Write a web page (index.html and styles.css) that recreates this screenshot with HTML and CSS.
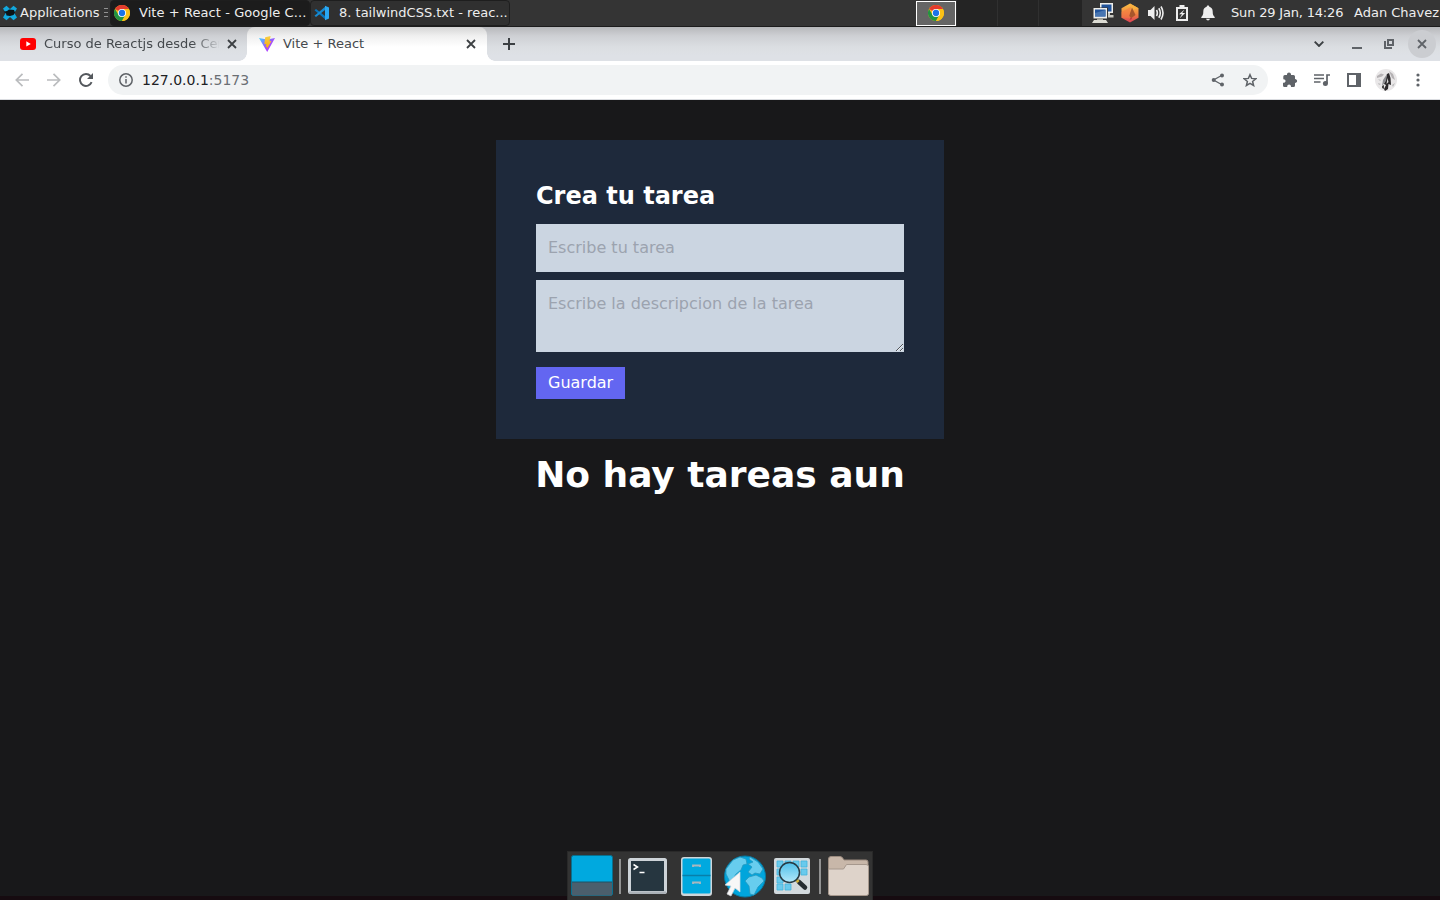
FILE: index.html
```html
<!DOCTYPE html>
<html lang="es">
<head>
<meta charset="utf-8">
<title>Vite + React</title>
<link rel="stylesheet" href="styles.css">
</head>
<body>
<svg class="defs" width="0" height="0">
  <defs>
    <linearGradient id="vite-a" x1="0" y1="0" x2="1" y2="1"><stop offset="0" stop-color="#41d1ff"/><stop offset=".55" stop-color="#a24dfe"/><stop offset="1" stop-color="#bd34fe"/></linearGradient>
    <linearGradient id="vite-b" x1="0" y1="0" x2="0" y2="1"><stop offset="0" stop-color="#f8d045"/><stop offset="1" stop-color="#f5a80c"/></linearGradient>
    <linearGradient id="gem" x1="0" y1="0" x2="0" y2="1"><stop offset="0" stop-color="#fbc045"/><stop offset=".5" stop-color="#f28a40"/><stop offset="1" stop-color="#dc3f55"/></linearGradient>
    <linearGradient id="lens" x1="0" y1="0" x2="0" y2="1"><stop offset="0" stop-color="#4dbfe9"/><stop offset="1" stop-color="#b4e8fa"/></linearGradient>
    <symbol id="chrome" viewBox="0 0 48 48">
      <circle cx="24" cy="24" r="24" fill="#fbc116"/>
      <path d="M24 24 3.2 12A24 24 0 0 1 44.8 12H24z" fill="#e33b2e"/>
      <path d="M3.2 12A24 24 0 0 0 24 48L34.4 30 24 24 13.6 30z" fill="#229342"/>
      <path d="M24 48A24 24 0 0 0 44.8 12H24L34.4 30z" fill="#fbc116"/>
      <circle cx="24" cy="24" r="12" fill="#fff"/><circle cx="24" cy="24" r="9.5" fill="#1a73e8"/>
    </symbol>
    <symbol id="cross" viewBox="0 0 10 10"><path d="m1 1 8 8M9 1 1 9" fill="none" stroke="currentColor" stroke-width="1.8"/></symbol>
  </defs>
</svg>
<div class="desktop">
  <header class="panel">
    <div class="apps">
      <svg width="16" height="16" viewBox="0 0 16 16"><path d="M1 3.500 4.500.8 8 4l3.500-3.200L15 3.500 12.300 8l2.700 4.500-3.500 2.700L8 12l-3.500 3.200L1 12.500 3.700 8z" fill="#12a8de"/><path d="M1.500 6.800 5 6l2-1.500 5 .5 1 2.500-1.500 2.500L8 11l-3.500-.5-.5-2.200z" fill="#0b1317"/></svg>
      <span>Applications</span>
      <svg class="grip" width="4" height="11" viewBox="0 0 4 11"><path d="M0 1.500h4M0 5.500h4M0 9.500h4" stroke="#929292"/></svg>
    </div>
    <div class="task task-active"><svg width="16" height="16"><use href="#chrome"/></svg><span>Vite + React - Google C...</span></div>
    <div class="task"><svg width="16" height="16" viewBox="0 0 16 16"><path d="M.5 5.200 2 4l10 7.800V15z" fill="#0875bd"/><path d="M.5 10.800 2 12l10-7.800V1z" fill="#168bd2"/><path d="m11 .8 4 1.700v11l-4 1.700z" fill="#2aa7f2"/></svg><span>8. tailwindCSS.txt - reac...</span></div>
    <div class="pager">
      <div class="space space-on"><svg width="16" height="16"><use href="#chrome"/></svg></div>
      <div class="space"></div><div class="space"></div><div class="space space-last"></div>
    </div>
    <div class="tray">
      <svg width="22" height="22" viewBox="0 0 22 22"><path d="M8 1h13v10H8z" fill="#eeeeea"/><path d="M9.500 2.500h10v7h-10z" fill="#20539b"/><path d="M13 11h5v2h3.500v2.500H13z" fill="#c9c9c2"/><path d="M1 5.500h15v11.500H1z" fill="#343434"/><path d="M1.500 6h13.500v10.500H1.500z" fill="#eeeeea"/><path d="M3 7.500h10.500v7H3z" fill="#20539b"/><path d="M3 11 13.500 8v6.500H3z" fill="#4775b1"/><path d="M5 16.500h6V18H5z" fill="#aaa99f"/><path d="M2 18h12l2 3H0z" fill="#dcdcd4"/></svg>
      <svg width="18" height="20" viewBox="0 0 18 20"><path d="m9 .5 8.500 4.700v9.600L9 19.500.5 14.800V5.200z" fill="url(#gem)"/><path d="m9 .5 8.500 4.700L11 7z" fill="#f7b03f"/><path d="m11 4.500 3.500 7.500-4 3L8 13z" fill="#a8562b"/><path d="m10 4-1.500 8.500L9 15 .5 14.800V9z" fill="#f27843" opacity=".55"/><path d="m8.500 17 1.500-3 1 2z" fill="#b2343f"/></svg>
      <svg width="16" height="16" viewBox="0 0 16 16"><path d="M0 5h2.500l4-4v14l-4-4H0z" fill="#eee"/><path d="M8.500 5q1.700 3 0 6M10.800 3.300q3 4.700 0 9.400M13 1.500q4 6.500 0 13" fill="none" stroke="#eee" stroke-width="1.600"/></svg>
      <svg width="12" height="16" viewBox="0 0 12 16"><path d="M3.500 0h5v2H12v14H0V2h3.500z" fill="#eee"/><path d="M2 4h8v10H2z" fill="#343434"/><path d="M8.500 4.500 3 9.200h3l-2.500 4.300L9.200 8H6.300z" fill="#eee"/></svg>
      <svg width="14" height="16" viewBox="0 0 14 16"><path d="M7 .5c.8 0 1.300.5 1.300 1.200C10.700 2.300 11.700 4 11.700 6.500c0 3 .5 4 2 5.500v1H.3v-1c1.500-1.500 2-2.500 2-5.500 0-2.500 1-4.200 3.400-4.800C5.700 1 6.200.5 7 .5zM5 13.700h4Q8.500 15.500 7 15.500T5 13.700z" fill="#eee"/></svg>
    </div>
    <span class="clock">Sun 29 Jan, 14:26</span>
    <span class="user">Adan Chavez</span>
  </header>

  <div class="tabs">
    <div class="tab">
      <svg width="16" height="16" viewBox="0 0 16 16"><rect y="2" width="16" height="12" rx="3" fill="#f00"/><path d="M6.300 5.300v5.200L10.800 8z" fill="#fff"/></svg>
      <span class="tab-title fade">Curso de Reactjs desde Cer</span>
      <svg class="x" width="10" height="10"><use href="#cross"/></svg>
    </div>
    <div class="tab tab-on">
      <svg width="16" height="16" viewBox="0 0 16 16"><path d="M0 2 8.200 16 16 2 8.200 3.400z" fill="url(#vite-a)"/><path d="m11.600 0-5.400 1.200-.9 7 2-.3-.7 3.200 1.500-.4-.3 2.500L12.500 5l-2 .2z" fill="url(#vite-b)"/></svg>
      <span class="tab-title">Vite + React</span>
      <svg class="x" width="10" height="10"><use href="#cross"/></svg>
    </div>
    <svg class="plus" width="12" height="12" viewBox="0 0 12 12"><path d="M6 0v12M0 6h12" stroke="#3c4043" stroke-width="2"/></svg>
    <div class="window-buttons">
      <svg width="10" height="6" viewBox="0 0 10 6"><path d="m.7.7 4.300 4.300L9.300.7" fill="none" stroke="#3c4043" stroke-width="1.900"/></svg>
      <svg width="10" height="10" viewBox="0 0 10 10"><path d="M0 9h10" stroke="#5f6368" stroke-width="2"/></svg>
      <svg width="10" height="10" viewBox="0 0 10 10"><path d="M4 1h5v5H4zM1 2v7h7" fill="none" stroke="#5f6368" stroke-width="2"/></svg>
      <span class="close"><svg width="10" height="10"><use href="#cross"/></svg></span>
    </div>
  </div>

  <div class="toolbar">
    <svg class="nav" width="14" height="14" viewBox="0 0 14 14"><path d="M14 7H1.500M7.500.8 1.300 7l6.200 6.200" fill="none" stroke="#babcbe" stroke-width="1.700"/></svg>
    <svg class="nav" width="14" height="14" viewBox="0 0 14 14"><path d="M0 7h12.500M6.500.8 12.700 7l-6.200 6.200" fill="none" stroke="#babcbe" stroke-width="1.700"/></svg>
    <svg class="nav" width="14" height="14" viewBox="0 0 14 14"><path d="M12.600 9.200A6 6 0 1 1 11.500 3" fill="none" stroke="#54585d" stroke-width="1.900"/><path d="M14 0v6H8z" fill="#54585d"/></svg>
    <div class="address">
      <svg width="14" height="14" viewBox="0 0 14 14"><circle cx="7" cy="7" r="6.200" fill="none" stroke="#5f6368" stroke-width="1.500"/><path d="M7 6v4.500M7 3.300v1.500" stroke="#5f6368" stroke-width="1.500"/></svg>
      <span class="url">127.0.0.1<i>:5173</i></span>
      <svg class="share" width="14" height="14" viewBox="0 0 14 14"><path d="M11 2.200 2.500 7l8.500 4.800" fill="none" stroke="#5f6368" stroke-width="1.300"/><circle cx="11" cy="2.400" r="2" fill="#5f6368"/><circle cx="2.700" cy="7" r="2" fill="#5f6368"/><circle cx="11" cy="11.600" r="2" fill="#5f6368"/></svg>
      <svg class="star" width="14" height="14" viewBox="0 0 14 14"><path d="m7 1.700 1.600 3.700 4.200.3-3.200 2.700 1 4.100L7 10.300l-3.600 2.200 1-4.100-3.200-2.700 4.200-.3z" fill="none" stroke="#5f6368" stroke-width="1.500"/></svg>
    </div>
    <div class="actions">
      <svg width="16" height="16" viewBox="0 0 16 16"><path d="M1.300 4.500Q1.300 3 2.800 3H5C4.500-.3 9.500-.3 9 3h2.500Q13 3 13 4.500V7c2.800.3 2.800 3.800 0 4v2.500q0 1.500-1.500 1.500H9c.2-3.500-4-3.500-3.800 0H2.500Q1 15 1 13.500v-2.700c3.300.2 3.300-3.800.3-3.600z" fill="#5f6368"/></svg>
      <svg class="music" width="16" height="14" viewBox="0 0 16 14"><path d="M0 2h10M0 5.500h10M0 9h6.500M13 10.500V2h3" fill="none" stroke="#5f6368" stroke-width="1.700"/><circle cx="11.400" cy="10.500" r="2.500" fill="#5f6368"/></svg>
      <svg class="side" width="14" height="14" viewBox="0 0 14 14"><path d="M1 1h12v12H1z" fill="none" stroke="#5f6368" stroke-width="2"/><path d="M9 1h4v12H9z" fill="#5f6368"/></svg>
      <svg class="avatar" width="22" height="22" viewBox="0 0 22 22"><circle cx="11" cy="11" r="11" fill="#e9e7e8"/><path d="M2 7 6 4.500l3 1-2 2-5 1.500zM14 2l4 3 2 6-3-2z" fill="#b5b2b4"/><path d="m12 5 2-1 1.500 5 .5 7-2.500-1-.5 5-3 2-1-2 2-4-2-1 2-6z" fill="#2b292b"/><path d="m8 11 4-6-1 7-4 5z" fill="#8d8e92"/><path d="m12.500 9 1 4-2 2z" fill="#dedede"/><path d="m7 17 2-1v4l-2-1z" fill="#444"/><path d="M3 10l3 1-1 1zM3 14l3 1-2 1zM17 16l3-2-2 4z" fill="#bbb"/></svg>
      <svg class="dots" width="4" height="14" viewBox="0 0 4 14"><g fill="#5f6368"><circle cx="2" cy="2" r="1.600"/><circle cx="2" cy="7" r="1.600"/><circle cx="2" cy="12" r="1.600"/></g></svg>
    </div>
  </div>

  <main class="page">
    <form class="form">
      <h2>Crea tu tarea</h2>
      <input type="text" placeholder="Escribe tu tarea">
      <textarea rows="2" placeholder="Escribe la descripcion de la tarea"></textarea>
      <button type="button">Guardar</button>
    </form>
    <h1>No hay tareas aun</h1>
  </main>

  <nav class="dock">
    <svg width="42" height="42" viewBox="0 0 42 42"><rect x=".5" y=".5" width="41" height="40" rx="2" fill="#00a9df" stroke="#08708f"/><path d="M1 27h40v12q0 1.500-1.500 1.500h-37Q1 40.500 1 39z" fill="#4b5f6d"/><path d="M1 27h40" stroke="#1c5366"/></svg>
    <i class="divider"></i>
    <svg class="term" width="39" height="36" viewBox="0 0 39 36"><rect width="39" height="36" rx="2.500" fill="#cdd3d8"/><path d="M1 33.500h37v1q-1 1.500-2 1.500H3q-2 0-2-1.500z" fill="#abb1b7"/><path d="M3 3h33v30H3z" fill="#263640"/><path d="m5.500 6.500 4 2.500-4 2.500M11.500 14.500h5" fill="none" stroke="#fff" stroke-width="1.500"/></svg>
    <svg class="cabinet" width="31" height="39" viewBox="0 0 31 39"><rect width="31" height="39" rx="3" fill="#cfd6da"/><rect x="1.500" y="1.500" width="28" height="35" rx="1.500" fill="#00a9df"/><path d="M1.500 18.500h28" stroke="#087fa9" stroke-width="1.500"/><path d="M12 10V8.500h7V10M12 27v-1.500h7V27" fill="none" stroke="#aab7be" stroke-width="1.800"/></svg>
    <svg class="globe" width="43" height="43" viewBox="0 0 43 43"><circle cx="22" cy="21.500" r="20.500" fill="#00a5dc" stroke="#08789f"/><path d="m3 14 7-9 7-3 6 2 1 5-4 1-2 5-5 4-3 5 5 4 1 5-4 1-5-7-4-8zM27 2l8 5 5 7-3 5-5-1-3 2-4-3 4-5-4-3 5-2-4-3zM26 22l7-2 6 3 2 3-6 6-4 8-4-1-1-8-4-5z" fill="#67cdee" stroke="#2698bf" stroke-width=".8"/><path d="M17 17v20l-5-4-4 8-4-2 4-8-6-1z" fill="#f7f7f7" stroke="#d2d9dd" stroke-width=".7"/></svg>
    <svg class="finder" width="36" height="37" viewBox="0 0 36 37"><rect width="36" height="36" rx="2" fill="#d2d9dd"/><g fill="#69caed" stroke="#42b4dc" stroke-width=".8"><path d="M3 3h6v6H3zM11 3h6v6h-6zM19 3h6v6h-6zM27 3h6v6h-6zM3 11h6v6H3zM27 11h6v6h-6zM3 19h6v6H3zM3 26h6v6H3zM11 26h6v6h-6z"/></g><path d="m25 24 6 5.500" stroke="#242d32" stroke-width="4.500" stroke-linecap="round"/><path d="m22 21.500 2.500 2.500" stroke="#d2b33c" stroke-width="3"/><circle cx="15.500" cy="14.500" r="10" fill="url(#lens)" stroke="#263943" stroke-width="1.500"/></svg>
    <i class="divider"></i>
    <svg class="folder" width="41" height="41" viewBox="0 0 41 41"><path d="M.5 3Q.5.5 3 .5h9q2 0 3 2l1 1.500h22q2 0 2 2v32H.5z" fill="#c8b7a9" stroke="#9a8a7e"/><path d="M.5 13h15l3-4.500H38q2.500 0 2.500 2v27q0 2-2 2H3q-2.500 0-2.500-2z" fill="#ded3ca" stroke="#a6988d"/></svg>
  </nav>
  <div class="bottom-edge"></div>
</div>
</body>
</html>
```

FILE: styles.css
```css
* { box-sizing: border-box; }
body { margin: 0; font-family: "DejaVu Sans", sans-serif; font-size: 13px; }
svg { display: block; flex: none; }
.defs { position: absolute; }
.desktop { position: relative; display: flex; flex-direction: column; width: 1440px; height: 900px; overflow: hidden; background: #18181a; }

.panel { display: flex; align-items: center; flex: none; height: 27px; padding-bottom: 1px; background: #343434; border-bottom: 1px solid #1c1c1c; color: #eee; white-space: nowrap; }
.apps { display: flex; align-items: center; width: 110px; padding-left: 2px; gap: 2px; }
.grip { margin-left: 3px; }
.task { display: flex; align-items: center; width: 200px; height: 26px; padding-left: 3px; gap: 9px; border: 1px solid #1e1e1e; border-radius: 4px; background: #303030; }
.task-active { background: #1c1c1c; letter-spacing: .07px; }
.pager { display: flex; margin-left: 406px; width: 166px; height: 26px; }
.space { display: flex; align-items: center; justify-content: center; width: 41px; height: 26px; background: #242424; border-left: 1px solid #303030; }
.space-on { width: 40px; height: 25px; margin-top: 1px; background: #656565; border: 1px solid #fff; }
.space-last { width: 44px; }
.tray { display: flex; align-items: center; margin-left: 10px; gap: 9px; }
.tray svg:nth-child(2) { margin-left: -2px; }
.tray svg:nth-child(4) { margin-left: 3px; }
.tray svg:nth-child(5) { margin-left: 4px; }
.clock { width: 113px; margin-left: auto; letter-spacing: -.18px; }
.user { width: 86px; margin-left: 10px; }

.tabs { display: flex; flex: none; height: 34px; background: linear-gradient(#b7b8bb, #ced0d4 9px, #dbdee2 20px, #dee1e6 28px); color: #45494d; }
.tab { position: relative; display: flex; align-items: center; width: 247px; padding: 0 10px 0 20px; gap: 8px; }
.tab-on { width: 240px; padding: 0 11px 0 12px; background: linear-gradient(#d5d5d5, #f0f0f0 9px, #fff 20px); border-radius: 8px 8px 0 0; }
.tab-on::before, .tab-on::after { content: ""; position: absolute; bottom: 0; width: 8px; height: 8px; }
.tab-on::before { left: -8px; background: radial-gradient(circle at 0 0, transparent 7.5px, #fff 8px); }
.tab-on::after { right: -8px; background: radial-gradient(circle at 100% 0, transparent 7.5px, #fff 8px); }
.tab-title { flex: 1; min-width: 0; padding-bottom: 2px; white-space: nowrap; }
.fade { -webkit-mask-image: linear-gradient(90deg, #000 148px, transparent 178px); mask-image: linear-gradient(90deg, #000 148px, transparent 178px); }
.x { color: #3c4043; }
.plus { margin: 11px 0 0 16px; }
.window-buttons { display: flex; align-items: center; margin-left: auto; padding-right: 4px; }
.window-buttons svg { margin-right: 28px; }
.window-buttons svg:nth-child(3) { margin-right: 14px; margin-left: -6px; }
.close { display: flex; align-items: center; justify-content: center; width: 28px; height: 28px; border-radius: 50%; background: #cbcdd1; color: #5f6368; }
.window-buttons .close svg { margin: 0; }

.toolbar { display: flex; align-items: center; flex: none; height: 39px; padding-left: 15px; background: #fff; border-bottom: 1px solid #dadce0; }
.nav { margin-right: 18px; }
.nav:nth-child(3) { margin-right: 15px; }
.address { display: flex; align-items: center; width: 1160px; height: 30px; padding: 0 11px; border-radius: 15px; background: #f1f3f4; }
.url { margin-left: 9px; font-size: 14px; color: #202124; }
.url i { font-style: normal; color: #6b6f74; }
.share { margin-left: auto; }
.star { margin-left: 18px; }
.actions { display: flex; align-items: center; margin-left: 14px; }
.music { margin-left: 16px; }
.side { margin-left: 17px; }
.avatar { margin-left: 14px; }
.dots { margin-left: 19px; }

.page { display: flex; flex-direction: column; align-items: center; padding-top: 40px; color: #fff; }
.form { width: 448px; height: 299px; padding: 40px; background: #1e293b; }
h1, h2 { margin: 0; font-weight: 700; }
h2 { margin-bottom: 12px; font-size: 24px; line-height: 32px; }
h1 { margin-top: 16px; font-size: 36px; line-height: 40px; }
input, textarea, button { display: block; border: 0; border-radius: 0; padding: 12px; font: 16px/24px "DejaVu Sans", sans-serif; }
input, textarea { width: 100%; margin: 0 0 8px; background: #cbd5e1; }
input { height: 48px; padding: 11px 12px 13px; }
textarea { height: 72px; margin-bottom: 15px; }
input::placeholder, textarea::placeholder { color: #9ca3af; }
button { height: 32px; padding: 4px 12px; background: #6366f1; color: #fff; }

.dock { position: absolute; z-index: 1; left: 567px; bottom: 0; display: flex; align-items: center; width: 306px; height: 49px; padding-left: 3px; background: #333; border: 1px solid #292929; border-bottom: 0; }
.divider { flex: none; width: 2px; height: 35px; margin: 0 7px 0 6px; background: #929292; }
.term { margin-right: 14px; }
.cabinet { margin-right: 11px; }
.globe { margin-right: 8px; }
.finder { margin-right: 3px; }
.bottom-edge { position: absolute; left: 0; right: 0; bottom: 0; height: 4px; background: #160b10; }
```
